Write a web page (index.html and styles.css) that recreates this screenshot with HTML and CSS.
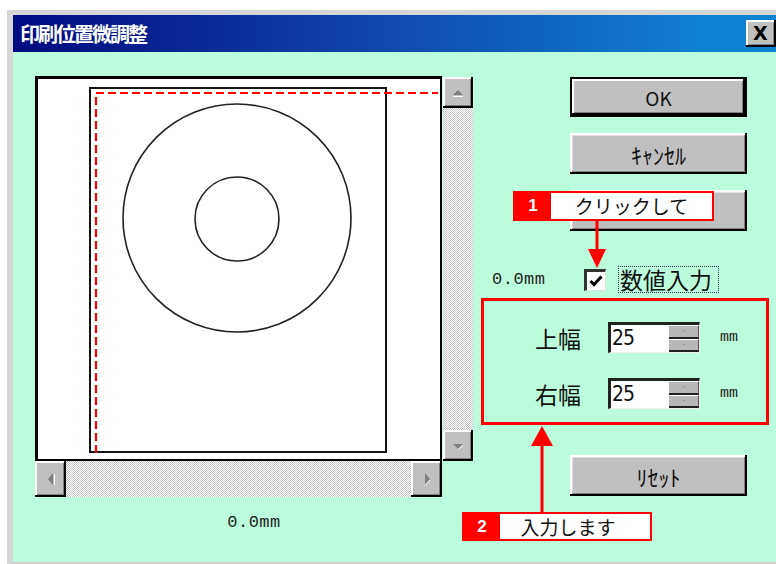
FILE: index.html
```html
<!DOCTYPE html>
<html lang="ja">
<head>
    <meta charset="UTF-8">
    <title>印刷位置微調整</title>
    <link rel="stylesheet" href="styles.css">
</head>
<body>
    <div class="window">
        <div class="titlebar">
            <span class="title">印刷位置微調整</span>
            <span class="close">X</span>
        </div>
        <div class="client">
            <div class="left">
                <div class="preview">
                    <div class="frame">
                        <svg width="402" height="380" viewBox="0 0 402 380">
                            <rect x="52" y="9" width="296" height="364" fill="#fff" stroke="#111" stroke-width="2"/>
                            <circle cx="199" cy="139" r="114" fill="none" stroke="#222" stroke-width="1.6"/>
                            <circle cx="199" cy="140" r="42" fill="none" stroke="#222" stroke-width="1.6"/>
                            <path d="M58 374 V14 H400" fill="none" stroke="#f00" stroke-width="2.2" stroke-dasharray="8 4"/>
                        </svg>
                    </div>
                    <div class="vscroll">
                        <span class="sbtn">
                            <svg width="14" height="10" viewBox="0 0 14 10"><polygon points="2,7 7,2 12,7" fill="#808080"/><line x1="2" y1="8.5" x2="12" y2="8.5" stroke="#fff"/></svg>
                        </span>
                        <span class="track"></span>
                        <span class="sbtn">
                            <svg width="14" height="10" viewBox="0 0 14 10"><polygon points="2,3 12,3 7,8" fill="#808080"/><line x1="7" y1="9" x2="12" y2="4" stroke="#fff"/></svg>
                        </span>
                    </div>
                    <div class="hscroll">
                        <span class="sbtn">
                            <svg width="10" height="16" viewBox="0 0 10 16"><polygon points="7,2 2,8 7,14" fill="#808080"/><line x1="8.5" y1="3" x2="8.5" y2="14" stroke="#fff"/></svg>
                        </span>
                        <span class="track"></span>
                        <span class="sbtn">
                            <svg width="10" height="16" viewBox="0 0 10 16"><polygon points="3,2 8,8 3,14" fill="#808080"/><line x1="3" y1="14.5" x2="8" y2="9" stroke="#fff"/></svg>
                        </span>
                    </div>
                    <span class="corner"></span>
                </div>
                <div class="pos">0.0mm</div>
            </div>

            <div class="right">
                <button class="btn default">OK</button>
                <button class="btn">ｷｬﾝｾﾙ</button>
                <button class="btn btn-third"></button>

                <div class="opt-row">
                    <span class="pos pos-side">0.0mm</span>
                    <span class="check">
                        <svg width="14" height="12" viewBox="0 0 14 12"><path d="M1.5 6 L5 9.5 L12.5 1.5" fill="none" stroke="#000" stroke-width="3"/></svg>
                    </span>
                    <span class="check-label">数値入力</span>
                </div>

                <div class="group">
                    <div class="field-row">
                        <span class="field-label">上幅</span>
                        <span class="spin">
                            <span class="spin-value">25</span>
                            <span class="spin-btns"><span class="spin-btn">·</span><span class="spin-btn">·</span></span>
                        </span>
                        <span class="unit">mm</span>
                    </div>
                    <div class="field-row">
                        <span class="field-label">右幅</span>
                        <span class="spin">
                            <span class="spin-value">25</span>
                            <span class="spin-btns"><span class="spin-btn">·</span><span class="spin-btn">·</span></span>
                        </span>
                        <span class="unit">mm</span>
                    </div>
                </div>

                <button class="btn btn-reset">ﾘｾｯﾄ</button>
            </div>

            <!-- annotations -->
            <div class="callout callout-1"><span class="num">1</span><span class="msg">クリックして</span></div>
            <svg class="arrow arrow-1" width="20" height="47" viewBox="0 0 20 47">
                <line x1="10" y1="0" x2="10" y2="32" stroke="#f00" stroke-width="3"/>
                <polygon points="1,28 19,28 10,47" fill="#f00"/>
            </svg>
            <svg class="arrow arrow-2" width="22" height="86" viewBox="0 0 22 86">
                <line x1="11" y1="16" x2="11" y2="86" stroke="#f00" stroke-width="3"/>
                <polygon points="0,20 22,20 11,0" fill="#f00"/>
            </svg>
            <div class="callout callout-2"><span class="num">2</span><span class="msg">入力します</span></div>
        </div>
    </div>
</body>
</html>
```

FILE: styles.css
```css
body {
    margin: 0;
    background: #fff;
    overflow: hidden;
    font-family: "Noto Sans CJK JP", "DejaVu Sans", sans-serif;
    color: #111;
}
.window {
    margin: 10px 0 0 7px;
    width: 765px;
    border-top: 5px solid #d6d6d6;
    border-left: 6px solid #d6d6d6;
    border-bottom: 2px solid #d0d0d0;
}
.titlebar {
    height: 37px;
    display: flex;
    align-items: center;
    justify-content: space-between;
    padding-left: 7px;
    background: linear-gradient(to right, #000a80 0%, #1044a8 45%, #1080d0 90%);
}
.title {
    color: #fff;
    font-weight: bold;
    font-size: 20px;
    letter-spacing: -2px;
}
.close {
    width: 30px;
    height: 27px;
    margin-right: 2px;
    box-sizing: border-box;
    background: #c0c0c0;
    box-shadow: inset -2px -2px #000, inset 2px 2px #fff, inset -3px -3px #808080;
    font: bold 19px "DejaVu Sans", sans-serif;
    color: #000;
    padding-left: 7px;
    line-height: 27px;
}
.client {
    position: relative;
    height: 510px;
    box-sizing: border-box;
    padding: 24px 0 0 22px;
    background: #bbfcdc;
    display: flex;
    gap: 8px;
}
.left {
    width: 438px;
}
.preview {
    display: grid;
    grid-template-columns: 408px 30px;
    grid-template-rows: 385px 36px;
}
.frame {
    background: #fff;
    border-top: 3px solid #000;
    border-left: 3px solid #000;
    border-right: 2px solid #000;
    border-bottom: 2px solid #000;
    width: 402px;
    height: 380px;
}
.frame svg { display: block; }
.vscroll {
    display: flex;
    flex-direction: column;
    margin-top: 1px;
}
.hscroll {
    display: flex;
    width: 407px;
}
.track {
    flex: 1;
    background: repeating-conic-gradient(#c6c6c6 0 25%, #fff 0 50%) 0 0 / 2px 2px;
}
.sbtn {
    display: flex;
    align-items: center;
    justify-content: center;
    width: 30px;
    height: 31px;
    background: #c0c0c0;
    box-shadow: inset -2px -2px #000, inset 2px 2px #fff, inset -3px -3px #808080;
}
.hscroll .sbtn {
    width: 31px;
    height: 36px;
}
.pos {
    font: 17px "Liberation Mono", "DejaVu Sans Mono", monospace;
    letter-spacing: 0.5px;
    text-align: center;
    margin-top: 16px;
    color: #222;
}
.right {
    width: 288px;
    display: flex;
    flex-direction: column;
    align-items: flex-start;
    padding-top: 1px;
}
.btn {
    margin-left: 89px;
    width: 177px;
    height: 41px;
    border: none;
    background: #c0c0c0;
    box-shadow: inset -2px -2px #000, inset 2px 2px #fff, inset -3px -3px #808080, inset 3px 3px #dfdfdf;
    font-family: "Noto Sans CJK JP", sans-serif;
    font-size: 22px;
    color: #111;
    padding: 0;
}
.btn + .btn { margin-top: 16px; }
.btn.default {
    height: 40px;
    box-shadow: inset 0 0 0 2px #000, inset -4px -4px #000, inset 4px 4px #fff, inset -5px -5px #808080;
    font-size: 19px;
}
.btn-third { margin-top: 17px; }
.opt-row {
    display: flex;
    align-items: center;
    margin-top: 35px;
    height: 27px;
}
.pos-side {
    margin: 0 0 0 11px;
    width: 60px;
    text-align: left;
}
.check {
    margin-left: 32px;
    width: 22px;
    height: 22px;
    box-sizing: border-box;
    background: #fff;
    border-top: 3px solid #333;
    border-left: 3px solid #333;
    border-right: 1px solid #ddd;
    border-bottom: 1px solid #ddd;
    display: flex;
    align-items: center;
    justify-content: center;
}
.check-label {
    margin-left: 12px;
    font-size: 23px;
    line-height: 25px;
    padding: 0 6px 0 1px;
    border: 1px dotted #335;
}
.group {
    margin-top: 5px;
    width: 288px;
    height: 127px;
    box-sizing: border-box;
    border: 3px solid #f00;
    padding: 21px 0 0 51px;
    display: flex;
    flex-direction: column;
    gap: 25px;
}
.field-row {
    display: flex;
    align-items: center;
    height: 31px;
}
.field-label {
    font-size: 23px;
    width: 73px;
}
.spin {
    display: flex;
    width: 92px;
    height: 31px;
    box-sizing: border-box;
    background: #fff;
    border-top: 3px solid #222;
    border-left: 3px solid #222;
    border-right: 1px solid #eee;
    border-bottom: 1px solid #eee;
}
.spin-value {
    flex: 1;
    font: 21px "Liberation Sans Narrow", "DejaVu Sans Condensed", "Liberation Sans", sans-serif;
    line-height: 27px;
    padding-left: 1px;
    letter-spacing: -1px;
}
.spin-btns {
    width: 30px;
    display: flex;
    flex-direction: column;
}
.spin-btn {
    flex: 1;
    background: #b8b8b8;
    border-top: 1px solid #fff;
    border-bottom: 2px solid #222;
    border-right: 1px solid #555;
    font: 10px/10px "DejaVu Sans", sans-serif;
    color: #777;
    text-align: center;
}
.unit {
    margin-left: 20px;
    font: 15px "Liberation Mono", monospace;
    color: #222;
}
.btn.btn-reset { margin-top: 30px; }
.callout {
    position: absolute;
    display: flex;
    box-sizing: border-box;
    border: 2px solid #f00;
    background: #fff;
}
.callout .num {
    width: 36px;
    background: #f00;
    color: #fff;
    font: bold 17px "Liberation Sans", sans-serif;
    display: flex;
    align-items: center;
    justify-content: center;
}
.callout .msg {
    flex: 1;
    text-align: center;
    font-size: 19px;
    line-height: 25px;
}
.callout-1 {
    left: 500px;
    top: 139px;
    width: 201px;
    height: 30px;
}
.callout-2 {
    left: 449px;
    top: 460px;
    width: 190px;
    height: 29px;
}
.callout-2 .msg { padding-right: 14px; }
.arrow { position: absolute; }
.arrow-1 { left: 574px; top: 169px; }
.arrow-2 { left: 518px; top: 374px; }
```
